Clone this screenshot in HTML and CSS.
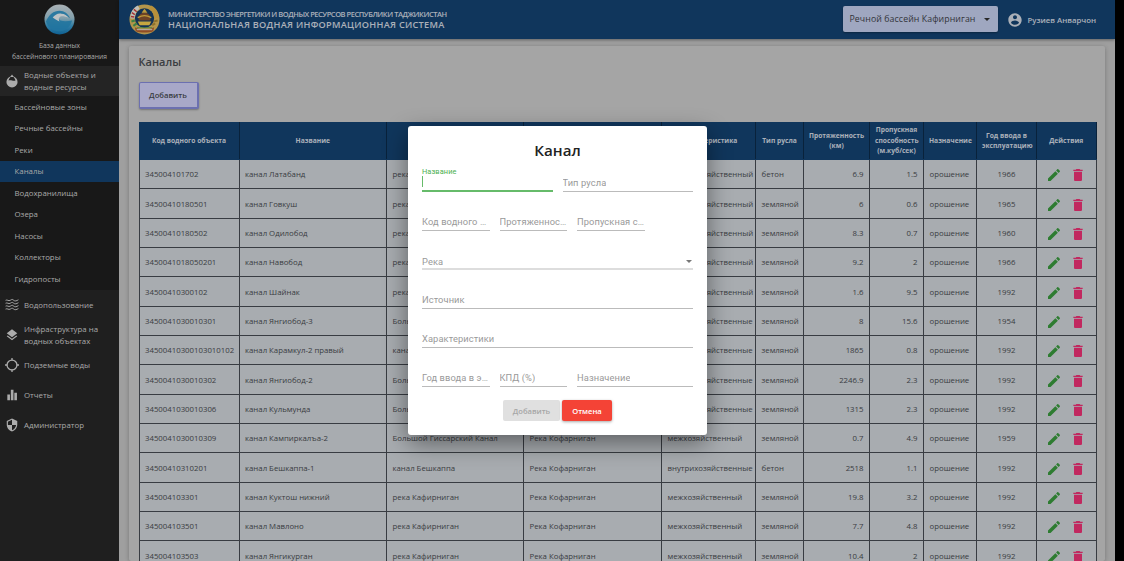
FILE: index.html
```html
<!DOCTYPE html>
<html lang="ru">
<head>
<meta charset="utf-8">
<title>Каналы</title>
<link rel="stylesheet" href="styles.css">
</head>
<body>
<svg class="defs" width="0" height="0" aria-hidden="true">
  <symbol id="i-edit" viewBox="0 0 24 24"><path d="M3 17.25V21h3.75L17.81 9.94l-3.75-3.75L3 17.25zM20.71 7.04c.39-.39.39-1.02 0-1.41l-2.34-2.34c-.39-.39-1.02-.39-1.41 0l-1.83 1.83 3.75 3.75 1.83-1.83z"/></symbol>
  <symbol id="i-del" viewBox="0 0 24 24"><path d="M6 19c0 1.1.9 2 2 2h8c1.1 0 2-.9 2-2V7H6v12zM19 4h-3.5l-1-1h-5l-1 1H5v2h14V4z"/></symbol>
</svg>
<div class="app">
  <aside class="sidebar">
    <div class="brand">
      <svg class="brand-logo" viewBox="0 0 32 32">
        <defs>
          <linearGradient id="sphere" x1="0" y1="0" x2="0" y2="1">
            <stop offset="0" stop-color="#d5dfe4"/><stop offset=".45" stop-color="#a4c8d6"/><stop offset=".7" stop-color="#3f9fd0"/><stop offset="1" stop-color="#1279b8"/>
          </linearGradient>
        </defs>
        <circle cx="16" cy="16" r="15.5" fill="url(#sphere)"/>
        <path d="M2 18c3-7 8-11 14-11 5 0 9 3 11 8-3-3-7-5-10-4-3 1-3 4 0 6 3 1 7 1 12 0-2 7-7 11-13 11-7 0-12-4-14-10z" fill="#2a92c8" opacity=".9"/>
        <path d="M9 14c2-3 6-5 9-4 3 0 6 2 7 4-3-1-6-2-8-1-2 1-2 3-1 5-3-1-5-3-7-4z" fill="#eef4f7"/>
      </svg>
      <div class="brand-text">База данных<br>бассейнового планирования</div>
    </div>
    <nav class="nav">
      <div class="nav-item nav-open">
        <svg class="nav-icon" viewBox="0 0 24 24"><circle cx="12" cy="13.5" r="9.500" fill="#d8d8d8"/><path d="M12 2.500c2.500 2.500 5 5 6 8.500-2 1-4 .5-6 0s-4-.5-6 0c1-3.500 3.500-6 6-8.500z" fill="#2b2b2b"/><path d="M12 1l-3 4h6z" fill="#d8d8d8"/></svg>
        <span>Водные объекты и водные ресурсы</span>
      </div>
      <div class="subnav">
        <a class="sub-item">Бассейновые зоны</a>
        <a class="sub-item">Речные бассейны</a>
        <a class="sub-item">Реки</a>
        <a class="sub-item active">Каналы</a>
        <a class="sub-item">Водохранилища</a>
        <a class="sub-item">Озера</a>
        <a class="sub-item">Насосы</a>
        <a class="sub-item">Коллекторы</a>
        <a class="sub-item">Гидропосты</a>
      </div>
      <div class="nav-item">
        <svg class="nav-icon outline" viewBox="0 0 24 24" stroke-width="1.600"><path d="M1 4c3-2 5 2 8 0s4-2 6 0 5 1 8-1M1 9c3-2 5 2 8 0s4-2 6 0 5 1 8-1M1 14c3-2 5 2 8 0s4-2 6 0 5 1 8-1M1 19c3-2 5 2 8 0s4-2 6 0 5 1 8-1"/></svg>
        <span>Водопользование</span>
      </div>
      <div class="nav-item">
        <svg class="nav-icon solid" viewBox="0 0 24 24"><path d="M11.990 18.540l-7.370-5.730L3 14.070l9 7 9-7-1.630-1.270-7.380 5.740zM12 16l7.360-5.730L21 9l-9-7-9 7 1.630 1.270L12 16z"/></svg>
        <span>Инфраструктура на водных объектах</span>
      </div>
      <div class="nav-item">
        <svg class="nav-icon outline" viewBox="0 0 24 24" stroke-width="2.200"><circle cx="12" cy="12" r="8.500"/><path d="M12 0v4M12 20v4M0 12h4M20 12h4"/></svg>
        <span>Подземные воды</span>
      </div>
      <div class="nav-item">
        <svg class="nav-icon solid" viewBox="0 0 24 24"><path d="M4 11h4.500v10H4zM10 3h4.500v18H10zM16 8h4.500v13H16z"/></svg>
        <span>Отчеты</span>
      </div>
      <div class="nav-item">
        <svg class="nav-icon solid" viewBox="0 0 24 24"><path d="M12 1L3 5v6c0 5.550 3.840 10.740 9 12 5.160-1.260 9-6.450 9-12V5l-9-4zm0 10.990h7c-.53 4.120-3.280 7.790-7 8.940V12H5V6.300l7-3.110v8.800z"/></svg>
        <span>Администратор</span>
      </div>
    </nav>
  </aside>

  <div class="main">
    <header class="topbar">
      <svg class="emblem" viewBox="0 0 32 32">
        <circle cx="16" cy="16" r="15.500" fill="#e0bb5e"/>
        <circle cx="16" cy="14.500" r="10" fill="#173f6a"/>
        <path d="M1.500 15C1 9 4 4 9 1.500l2 3.500C8 7 6 10 6 15z" fill="#efefe6"/>
        <path d="M3 9l3 2M5 5.500l3 2.500M2 13l3.500.5" stroke="#d04040" stroke-width="1.500"/>
        <path d="M2.500 18l3.500-1M4.500 22.500l3.500-2.500" stroke="#4aa055" stroke-width="2.200"/>
        <path d="M23 1.500c5 2.500 8 7 7.500 13l-4.500.5c0-4-2-8-5-10z" fill="#e4b54a"/>
        <path d="M26 18l3.500-1M24 22l3-2" stroke="#b08c35" stroke-width="2"/>
        <path d="M10 14c0-3 3-5 6-5s6 2 6 5v3H10z" fill="#8a5430"/>
        <path d="M9 14c2-1 4-2 7-2s5 1 7 2" stroke="#efc248" stroke-width="1.500" fill="none"/>
        <path d="M13 9l3-4 3 4z" fill="#efc248"/>
        <path d="M9 18h14l-2 4H11z" fill="#f7d050"/>
        <path d="M6 24c5 3 15 3 20 0l-1 4c-5 2-13 2-18 0z" fill="#b5602f"/>
        <path d="M8 26.500h16" stroke="#f4f4f4" stroke-width=".9"/>
        <path d="M8 24.500h16" stroke="#4aa055" stroke-width=".9"/>
      </svg>
      <div class="titles">
        <div class="title-sm">МИНИСТЕРСТВО ЭНЕРГЕТИКИ И ВОДНЫХ РЕСУРСОВ РЕСПУБЛИКИ ТАДЖИКИСТАН</div>
        <div class="title-lg">НАЦИОНАЛЬНАЯ ВОДНАЯ ИНФОРМАЦИОННАЯ СИСТЕМА</div>
      </div>
      <div class="basin"><span>Речной бассейн Кафирниган</span><i class="caret"></i></div>
      <div class="user">
        <svg class="user-icon" viewBox="0 0 24 24"><path d="M12 2C6.480 2 2 6.480 2 12s4.480 10 10 10 10-4.480 10-10S17.520 2 12 2zm0 3c1.660 0 3 1.340 3 3s-1.340 3-3 3-3-1.340-3-3 1.340-3 3-3zm0 14.200c-2.500 0-4.710-1.280-6-3.220.03-1.990 4-3.080 6-3.080 1.990 0 5.970 1.090 6 3.080-1.290 1.940-3.500 3.220-6 3.220z"/></svg>
        <span>Рузиев Анварчон</span>
      </div>
    </header>

    <section class="card">
      <h1 class="page-title">Каналы</h1>
      <button class="add-btn">Добавить</button>
      <table class="grid">
        <colgroup>
          <col class="c1"><col class="c2"><col class="c3"><col class="c4"><col class="c5"><col class="c6"><col class="c7"><col class="c8"><col class="c9"><col class="c10"><col class="c11">
        </colgroup>
        <thead>
          <tr><th>Код водного объекта</th><th>Название</th><th>Источник</th><th>Река</th><th>Характеристика</th><th>Тип русла</th><th>Протяженность (км)</th><th>Пропускная способность (м.куб/сек)</th><th>Назначение</th><th>Год ввода в эксплуатацию</th><th>Действия</th></tr>
        </thead>
        <tbody>
          <tr><td>345004101702</td><td>канал Латабанд</td><td>река Кафирниган</td><td>Река Кофарниган</td><td>внутрихозяйственный</td><td>бетон</td><td class="num">6.9</td><td class="num">1.5</td><td>орошение</td><td class="center">1966</td><td class="acts"><svg class="ico edit"><use href="#i-edit"/></svg><svg class="ico del"><use href="#i-del"/></svg></td></tr>
          <tr><td>34500410180501</td><td>канал Говкуш</td><td>река Кафирниган</td><td>Река Кофарниган</td><td>внутрихозяйственный</td><td>земляной</td><td class="num">6</td><td class="num">0.6</td><td>орошение</td><td class="center">1965</td><td class="acts"><svg class="ico edit"><use href="#i-edit"/></svg><svg class="ico del"><use href="#i-del"/></svg></td></tr>
          <tr><td>34500410180502</td><td>канал Одилобод</td><td>река Кафирниган</td><td>Река Кофарниган</td><td>внутрихозяйственный</td><td>земляной</td><td class="num">8.3</td><td class="num">0.7</td><td>орошение</td><td class="center">1960</td><td class="acts"><svg class="ico edit"><use href="#i-edit"/></svg><svg class="ico del"><use href="#i-del"/></svg></td></tr>
          <tr><td>3450041018050201</td><td>канал Навобод</td><td>река Кафирниган</td><td>Река Кофарниган</td><td>внутрихозяйственный</td><td>земляной</td><td class="num">9.2</td><td class="num">2</td><td>орошение</td><td class="center">1966</td><td class="acts"><svg class="ico edit"><use href="#i-edit"/></svg><svg class="ico del"><use href="#i-del"/></svg></td></tr>
          <tr><td>34500410300102</td><td>канал Шайнак</td><td>река Кафирниган</td><td>Река Кофарниган</td><td>внутрихозяйственный</td><td>земляной</td><td class="num">1.6</td><td class="num">9.5</td><td>орошение</td><td class="center">1992</td><td class="acts"><svg class="ico edit"><use href="#i-edit"/></svg><svg class="ico del"><use href="#i-del"/></svg></td></tr>
          <tr><td>3450041030010301</td><td>канал Янгиобод-3</td><td>Большой Гиссарский Канал</td><td>Река Кофарниган</td><td>внутрихозяйственные</td><td>земляной</td><td class="num">8</td><td class="num">15.6</td><td>орошение</td><td class="center">1954</td><td class="acts"><svg class="ico edit"><use href="#i-edit"/></svg><svg class="ico del"><use href="#i-del"/></svg></td></tr>
          <tr><td>34500410300103010102</td><td>канал Карамкул-2 правый</td><td>канал Карамкул-2</td><td>Река Кофарниган</td><td>внутрихозяйственные</td><td>земляной</td><td class="num">1865</td><td class="num">0.8</td><td>орошение</td><td class="center">1992</td><td class="acts"><svg class="ico edit"><use href="#i-edit"/></svg><svg class="ico del"><use href="#i-del"/></svg></td></tr>
          <tr><td>3450041030010302</td><td>канал Янгиобод-2</td><td>Большой Гиссарский Канал</td><td>Река Кофарниган</td><td>внутрихозяйственные</td><td>земляной</td><td class="num">2246.9</td><td class="num">2.3</td><td>орошение</td><td class="center">1992</td><td class="acts"><svg class="ico edit"><use href="#i-edit"/></svg><svg class="ico del"><use href="#i-del"/></svg></td></tr>
          <tr><td>3450041030010306</td><td>канал Кульмунда</td><td>Большой Гиссарский Канал</td><td>Река Кофарниган</td><td>внутрихозяйственные</td><td>земляной</td><td class="num">1315</td><td class="num">2.3</td><td>орошение</td><td class="center">1992</td><td class="acts"><svg class="ico edit"><use href="#i-edit"/></svg><svg class="ico del"><use href="#i-del"/></svg></td></tr>
          <tr><td>3450041030010309</td><td>канал Кампиркалъа-2</td><td>Большой Гиссарский Канал</td><td>Река Кофарниган</td><td>межхозяйственный</td><td>земляной</td><td class="num">0.7</td><td class="num">4.9</td><td>орошение</td><td class="center">1959</td><td class="acts"><svg class="ico edit"><use href="#i-edit"/></svg><svg class="ico del"><use href="#i-del"/></svg></td></tr>
          <tr><td>34500410310201</td><td>канал Бешкаппа-1</td><td>канал Бешкаппа</td><td>Река Кофарниган</td><td>внутрихозяйственные</td><td>бетон</td><td class="num">2518</td><td class="num">1.1</td><td>орошение</td><td class="center">1992</td><td class="acts"><svg class="ico edit"><use href="#i-edit"/></svg><svg class="ico del"><use href="#i-del"/></svg></td></tr>
          <tr><td>345004103301</td><td>канал Куктош нижний</td><td>река Кафирниган</td><td>Река Кофарниган</td><td>межхозяйственный</td><td>земляной</td><td class="num">19.8</td><td class="num">3.2</td><td>орошение</td><td class="center">1992</td><td class="acts"><svg class="ico edit"><use href="#i-edit"/></svg><svg class="ico del"><use href="#i-del"/></svg></td></tr>
          <tr><td>345004103501</td><td>канал Мавлоно</td><td>река Кафирниган</td><td>Река Кофарниган</td><td>межхозяйственный</td><td>земляной</td><td class="num">7.7</td><td class="num">4.8</td><td>орошение</td><td class="center">1992</td><td class="acts"><svg class="ico edit"><use href="#i-edit"/></svg><svg class="ico del"><use href="#i-del"/></svg></td></tr>
          <tr><td>345004103503</td><td>канал Янгикурган</td><td>река Кафирниган</td><td>Река Кофарниган</td><td>межхозяйственный</td><td>земляной</td><td class="num">10.4</td><td class="num">2</td><td>орошение</td><td class="center">1992</td><td class="acts"><svg class="ico edit"><use href="#i-edit"/></svg><svg class="ico del"><use href="#i-del"/></svg></td></tr>
        </tbody>
      </table>
    </section>
  </div>

  <div class="backdrop">
    <div class="modal">
      <h2 class="modal-title">Канал</h2>
      <div class="form-row first">
        <div class="field focused"><label>Название</label><i class="cursor"></i></div>
        <div class="field"><span>Тип русла</span></div>
      </div>
      <div class="form-row">
        <div class="field third"><span>Код водного объекта</span></div>
        <div class="field third"><span>Протяженность (км)</span></div>
        <div class="field third"><span>Пропускная способность</span></div>
        <div class="spacer"></div>
      </div>
      <div class="form-row">
        <div class="field select"><span>Река</span><i class="caret small"></i></div>
      </div>
      <div class="form-row"><div class="field"><span>Источник</span></div></div>
      <div class="form-row"><div class="field"><span>Характеристики</span></div></div>
      <div class="form-row">
        <div class="field third"><span>Год ввода в эксплуатацию</span></div>
        <div class="field third"><span>КПД (%)</span></div>
        <div class="field"><span>Назначение</span></div>
      </div>
      <div class="actions">
        <button class="btn disabled">Добавить</button>
        <button class="btn cancel">Отмена</button>
      </div>
    </div>
  </div>
</div>
</body>
</html>
```
FILE: styles.css
```css
* { box-sizing: border-box; }
html, body { margin: 0; height: 100%; overflow: hidden; background: #000; }
body { font-family: "Open Sans", "Noto Sans", sans-serif; color: #4a4d52; }
.defs { position: absolute; }

.app { position: relative; display: flex; width: 1115px; height: 561px; overflow: hidden; background: #c7c7c7; }

.sidebar { flex: 0 0 119px; background: #272727; color: #d2d2d2; font-size: 7.850px; }
.brand { height: 66px; padding-top: 4px; text-align: center; background: #1e1e1e; font-size: 6.700px; line-height: 11px; }
.brand-logo { display: block; width: 31px; height: 31px; margin: 0 auto 4.500px; }
.nav-item { display: flex; align-items: center; height: 30px; padding-left: 5px; line-height: 12.500px; }
.nav-icon { flex: 0 0 14px; width: 14px; height: 14px; margin-right: 5px; }
.nav-icon.solid { fill: #d8d8d8; }
.nav-icon.outline { fill: none; stroke: #d8d8d8; }
.nav-open { background: #2d2d2d; }
.subnav { background: #1e1e1e; height: 194px; }
.sub-item { display: flex; align-items: center; height: 21.500px; padding-left: 14.500px; }
.sub-item.active { background: #154473; }

.main { flex: 1; min-width: 0; display: flex; flex-direction: column; }
.topbar { flex: 0 0 39px; display: flex; align-items: center; padding: 0 19px 0 10px; background: #154473; color: #d6dde6; box-shadow: 0 1px 3px rgba(0,0,0,.4); position: relative; }
.emblem { flex: 0 0 31px; width: 31px; height: 31px; margin-right: 8px; }
.titles { flex: 1; min-width: 0; }
.title-sm { font-size: 7.500px; font-weight: 600; line-height: 10px; letter-spacing: -.46px; white-space: nowrap; }
.title-lg { font-size: 9.200px; font-weight: 600; line-height: 12px; letter-spacing: .27px; white-space: nowrap; }
.basin { flex: 0 0 155px; display: flex; align-items: center; justify-content: space-between; height: 26px; padding: 0 8px 0 6px; margin-top: -1px; border-radius: 2px; background: #c7d1f0; color: #3f4248; font-size: 8.750px; letter-spacing: .1px; white-space: nowrap; box-shadow: 0 1px 2px rgba(0,0,0,.3); }
.caret { width: 0; height: 0; border-left: 3.500px solid transparent; border-right: 3.500px solid transparent; border-top: 3.500px solid #333; }
.caret.small { border-left-width: 3px; border-right-width: 3px; border-top-width: 3px; border-top-color: #777; }
.user { display: flex; align-items: center; margin-left: 9px; font-size: 7.800px; font-weight: 600; white-space: nowrap; }
.user-icon { width: 16px; height: 16px; margin-right: 4px; fill: #d6dde6; }

.card { flex: 1; margin: 7px 10px 0; padding: 8px 9.500px; background: #cfcfcf; border-radius: 2px; box-shadow: 0 1px 4px rgba(0,0,0,.25); min-height: 0; }
.page-title { margin: 0; font-size: 11px; line-height: 15px; font-weight: 600; }
.add-btn { display: block; width: 60px; height: 27px; margin: 12.500px 0 13.500px; padding: 0; border: 1px solid #888ddc; border-right-width: 2px; border-bottom-width: 2px; border-radius: 2px; background: #d3d3fb; color: #4a4d52; font: 600 7.700px "Open Sans", sans-serif; box-shadow: 0 1px 2px rgba(0,0,0,.3); }

.grid { table-layout: fixed; width: 957px; border-collapse: collapse; font-size: 7.800px; background: #d2d7dc; }
.c1 { width: 100px; } .c2 { width: 147.500px; } .c3 { width: 137px; } .c4 { width: 138px; } .c5 { width: 94px; } .c6 { width: 48px; } .c7 { width: 66px; } .c8 { width: 54px; } .c9 { width: 53px; } .c10 { width: 60px; } .c11 { width: 59.500px; }
th { height: 37px; padding: 0 5px; background: #154473; color: #d6dde6; font-size: 6.700px; font-weight: 700; text-align: center; line-height: 10.500px; border: 1px solid #154473; border-right-color: #0c2b4a; }
td { height: 29.350px; padding: 0 5.500px; border: 1px solid #474c53; white-space: nowrap; overflow: hidden; }
.num { text-align: right; }
.center { text-align: center; }
.acts { padding: 0; text-align: center; white-space: nowrap; }
.ico { display: inline-block; width: 16px; height: 16px; vertical-align: middle; margin: 2px 4px 0; }
.edit { fill: #3a9c3e; }
.del { fill: #f23277; }

.backdrop { position: absolute; inset: 0; display: flex; align-items: center; justify-content: center; background: rgba(0,0,0,.2); }
.modal { width: 299px; height: 309px; padding: 14px; background: #fff; border-radius: 3px; box-shadow: 0 8px 24px rgba(0,0,0,.45); }
.modal-title { margin: 0; height: 25px; font-family: "Open Sans", sans-serif; font-size: 15.200px; line-height: 21px; font-weight: 600; text-align: center; color: #222; }
.form-row { display: flex; gap: 10px; height: 39.200px; padding-top: 12.200px; }
.form-row.first { height: 26.500px; padding-top: 0; }
.field { position: relative; flex: 1 1 0; min-width: 0; display: flex; align-items: flex-end; padding-bottom: 2px; border-bottom: 1px solid #bbb; font-family: Roboto, "Open Sans", sans-serif; font-size: 9.300px; line-height: 12px; letter-spacing: .1px; color: #999; }
.field span { white-space: nowrap; overflow: hidden; text-overflow: ellipsis; }
.third { flex: 0 0 67.500px; }
.spacer { flex: 1; }
.select { justify-content: space-between; border-bottom: 2px solid #ddd; padding-bottom: 0; padding-right: 1px; }
.select .caret { margin-bottom: 5px; }
.focused { border-bottom: 2px solid #66bb6a; }
.focused label { position: absolute; left: 0; top: 2px; font-size: 7.400px; line-height: 9px; color: #4caf50; }
.cursor { display: block; width: 1px; height: 11px; margin-bottom: 1px; background: #66bb6a; }
.actions { display: flex; justify-content: center; gap: 2px; margin-top: 13px; }
.btn { height: 21px; padding: 0; border: 0; border-radius: 2px; font: 600 7.600px "Open Sans", sans-serif; }
.disabled { width: 57px; background: #e0e0e0; color: #a6a6a6; }
.cancel { width: 50px; background: #f44336; color: #fff; box-shadow: 0 1px 3px rgba(0,0,0,.35); }
```
